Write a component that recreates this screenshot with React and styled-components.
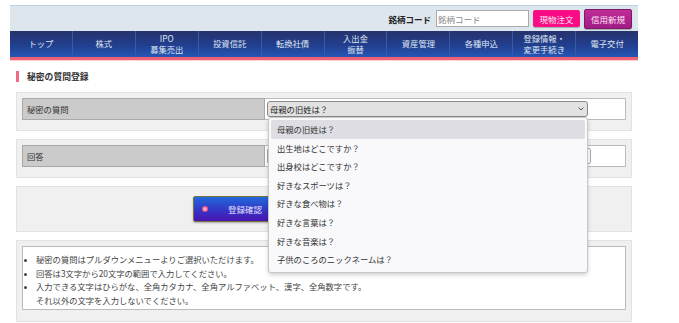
import styled, { createGlobalStyle } from "styled-components"

const GlobalStyle = createGlobalStyle`
  body {
    margin: 0;
    background: #fff;
    font-family: "Noto Sans CJK JP", "Noto Sans", sans-serif;
    color: #333;
  }
`

const Page = styled.div`
  width: 628px;
  padding: 5px 0 0 10px;
`

const TopBar = styled.div`
  height: 25px;
  background: #dde6ed;
  border-top: 1px solid #b9cfe3;
  display: flex;
  align-items: center;
  justify-content: flex-end;
  padding-right: 6px;
  gap: 4px;
`

const CodeLabel = styled.span`
  font-size: 8.5px;
  font-weight: 700;
  color: #222;
  margin-right: 1px;
`

const CodeInput = styled.input`
  width: 89px;
  height: 15px;
  box-sizing: content-box;
  border: 1px solid #aaa;
  padding: 0 1px;
  font-size: 8.5px;
  font-family: inherit;
  outline: none;
  &::placeholder { color: #888; }
`

const HeadButton = styled.button`
  height: ${p => (p.$tall ? 20 : 17)}px;
  width: ${p => p.$w}px;
  padding: 0;
  border: 1px solid ${p => p.$border};
  border-radius: 2px;
  background: ${p => p.$bg};
  color: #ffe8f4;
  font-size: 8.5px;
  font-family: inherit;
  box-shadow: 0 1px 1px rgba(0, 0, 0, 0.25);
`

const Nav = styled.nav`
  display: flex;
  height: 26px;
  background: linear-gradient(to bottom, #27326c 0%, #213f8e 55%, #2556b6 100%);
  border-bottom: 3px solid #ee6073;
  box-shadow: 0 1px 0 #fcd3da;
`

const NavItem = styled.div`
  flex: 1;
  display: flex;
  align-items: center;
  justify-content: center;
  text-align: center;
  color: #dfe5f3;
  font-size: 8.3px;
  line-height: 11.5px;
  border-left: 1px solid #3a5aa6;
  &:first-child { border-left: none; }
`

const Content = styled.main`
  padding: 6px 6px 0 6px;
`

const Title = styled.h1`
  margin: 5px 0 10px;
  height: 11px;
  padding-left: 8px;
  border-left: 3px solid #f06a82;
  font-size: 8.8px;
  line-height: 11px;
  font-weight: 700;
  color: #333;
`

const Panel = styled.section`
  background: #f0f0f0;
  border: 1px solid #e2e2e2;
  padding: ${p => (p.$center ? "9px 5px" : "5px 5px 10px")};
  margin-bottom: 8px;
  display: flex;
  justify-content: ${p => (p.$center ? "center" : "flex-start")};
`

const Row = styled.div`
  display: flex;
  width: 100%;
  height: 22px;
`

const LabelCell = styled.div`
  width: 237px;
  background: #cbcbcb;
  border: 1px solid #a9a9a9;
  display: flex;
  align-items: center;
  padding-left: 4px;
  font-size: 8.3px;
  color: #333;
`

const ValueCell = styled.div`
  flex: 1;
  background: #fff;
  border: 1px solid #bbb;
  border-left: none;
  display: flex;
  align-items: center;
  padding-left: 2px;
  position: relative;
`

const SelectBox = styled.div`
  width: 314px;
  height: 14px;
  background: #e2e2e2;
  border: 1px solid #8a8a8a;
  border-radius: 3px;
  display: flex;
  align-items: center;
  justify-content: space-between;
  padding: 0 3px 0 2px;
  font-size: 8.3px;
  color: #222;
  position: relative;
`

const Menu = styled.ul`
  position: absolute;
  top: 15px;
  left: 0;
  width: 314px;
  margin: 0;
  padding: 2px 2px 3px;
  list-style: none;
  background: #f9f9fb;
  border: 1px solid #c8c8cc;
  border-radius: 3px;
  box-shadow: 0 2px 4px rgba(0, 0, 0, 0.18);
  z-index: 5;
`

const MenuItem = styled.li`
  height: 18.6px;
  line-height: 18.6px;
  padding-left: 6px;
  font-size: 8.3px;
  color: #333;
  border-radius: 2px;
  background: ${p => (p.$active ? "#dedde3" : "transparent")};
`

const AnswerInput = styled.div`
  width: 322px;
  height: 14px;
  border: 1px solid #aaa;
  border-radius: 2px;
  background: #fff;
`

const ConfirmButton = styled.button`
  margin: 0 0 0 -130px;
  width: 132px;
  height: 26px;
  display: flex;
  align-items: center;
  padding: 0 0 0 8px;
  gap: 20px;
  border: 1px solid #77763c;
  border-radius: 2px;
  background: linear-gradient(to bottom, #2168dc 0%, #3436c4 55%, #4a14b2 100%);
  color: #e6e0ff;
  font-size: 8.5px;
  font-family: inherit;
  box-shadow: 0 1px 2px rgba(0, 0, 0, 0.3);
`

const Dot = styled.span`
  width: 6px;
  height: 6px;
  border-radius: 50%;
  background: radial-gradient(circle, #fbb3cc 20%, #ef4f87 60%);
`

const Notes = styled.ul`
  width: 100%;
  height: 64px;
  margin: 0 0 1px;
  padding: 6px 6px 0 13px;
  background: #fff;
  border: 1px solid #bbb;
  font-size: 8.3px;
  line-height: 13.6px;
  color: #444;
  box-sizing: border-box;
  li::marker { font-size: 7px; }
`

const navItems = [
  "トップ", "株式", "IPO\n募集売出", "投資信託", "転換社債",
  "入出金\n振替", "資産管理", "各種申込", "登録情報・\n変更手続き", "電子交付",
]

const questions = [
  "母親の旧姓は？", "出生地はどこですか？", "出身校はどこですか？", "好きなスポーツは？",
  "好きな食べ物は？", "好きな言葉は？", "好きな音楽は？", "子供のころのニックネームは？",
]

export default function App() {
  return (
    <>
      <GlobalStyle />
      <Page>
        <TopBar>
          <CodeLabel>銘柄コード</CodeLabel>
          <CodeInput placeholder="銘柄コード" />
          <HeadButton $w={47} $bg="#fa0a84" $border="#f3187f">現物注文</HeadButton>
          <HeadButton $w={48} $tall $bg="linear-gradient(#c02c98, #a11c86)" $border="#7b1a68">信用新規</HeadButton>
        </TopBar>
        <Nav>
          {navItems.map(t => (
            <NavItem key={t}>
              <span>{t.split("\n").map((l, i) => <div key={i}>{l}</div>)}</span>
            </NavItem>
          ))}
        </Nav>
        <Content>
          <Title>秘密の質問登録</Title>
          <Panel>
            <Row>
              <LabelCell>秘密の質問</LabelCell>
              <ValueCell>
                <SelectBox>
                  <span>母親の旧姓は？</span>
                  <svg width="6" height="4" viewBox="0 0 6 4">
                    <path d="M0.5 0.5 L3 3 L5.5 0.5" fill="none" stroke="#555" strokeWidth="1" />
                  </svg>
                  <Menu>
                    {questions.map((q, i) => (
                      <MenuItem key={q} $active={i === 0}>{q}</MenuItem>
                    ))}
                  </Menu>
                </SelectBox>
              </ValueCell>
            </Row>
          </Panel>
          <Panel>
            <Row>
              <LabelCell>回答</LabelCell>
              <ValueCell>
                <AnswerInput />
              </ValueCell>
            </Row>
          </Panel>
          <Panel $center>
            <ConfirmButton>
              <Dot />
              登録確認
            </ConfirmButton>
          </Panel>
          <Panel>
            <Notes>
              <li>秘密の質問はプルダウンメニューよりご選択いただけます。</li>
              <li>回答は3文字から20文字の範囲で入力してください。</li>
              <li>入力できる文字はひらがな、全角カタカナ、全角アルファベット、漢字、全角数字です。<br />それ以外の文字を入力しないでください。</li>
            </Notes>
          </Panel>
        </Content>
      </Page>
    </>
  )
}
